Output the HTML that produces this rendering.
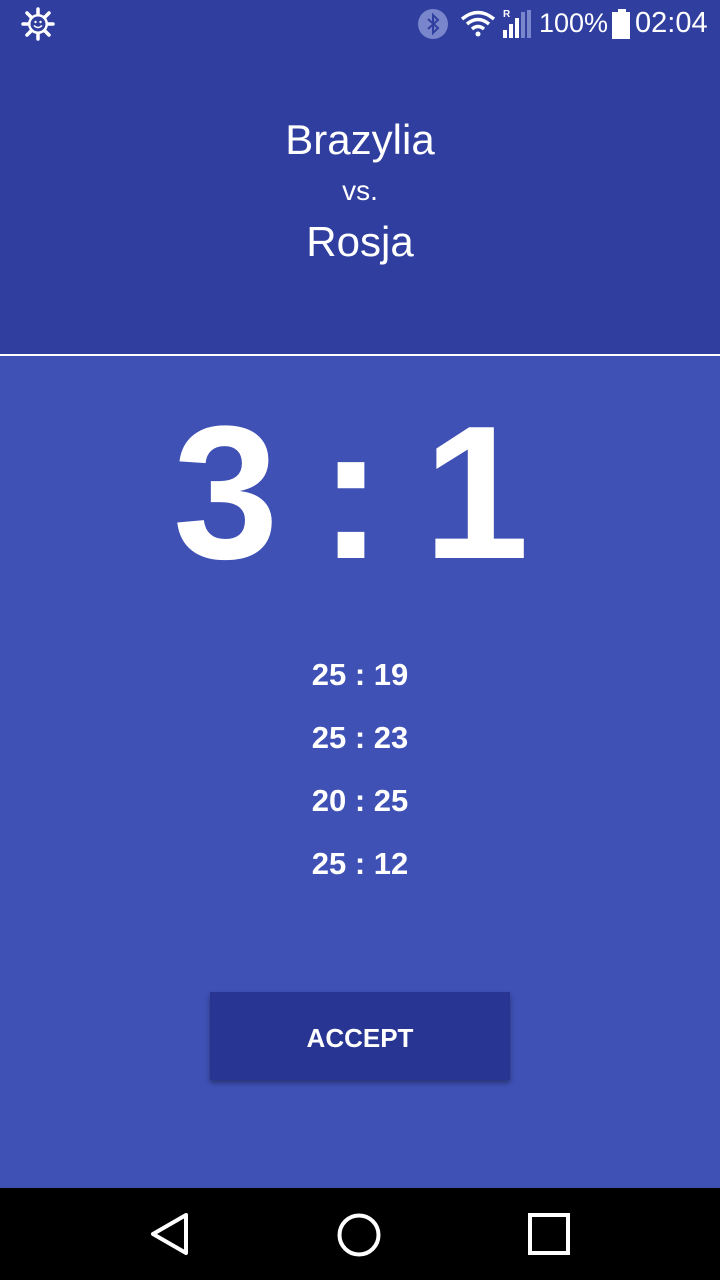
<!DOCTYPE html>
<html><head><style>
body{margin:0;width:720px;height:1280px;overflow:hidden;font-family:"Liberation Sans",sans-serif;background:#3F51B5;position:relative;color:#fff}
.hdr{position:absolute;left:0;top:0;width:720px;height:354px;background:#303F9F}
.line{position:absolute;left:0;top:354px;width:720px;height:2px;background:#fff}
.t{position:absolute;left:0;width:720px;text-align:center;white-space:nowrap}
.nav{position:absolute;left:0;top:1188px;width:720px;height:92px;background:#000}
.btn{position:absolute;left:210px;top:992px;width:300px;height:88px;background:#283593;box-shadow:0 3px 5px rgba(0,0,0,.35);font-size:26px;font-weight:bold;text-align:center;line-height:92px}
</style></head><body>
<div class="hdr"></div>
<div class="line"></div>
<svg style="position:absolute;left:20px;top:6px" width="36" height="36" viewBox="0 0 36 36"><g stroke="#fff" stroke-width="3.5" stroke-linecap="round"><line x1="18" y1="3" x2="18" y2="33"/><line x1="3" y1="18" x2="33" y2="18"/><line x1="7" y1="7" x2="29" y2="29"/><line x1="29" y1="7" x2="7" y2="29"/></g><circle cx="18" cy="18" r="10" fill="#fff"/><circle cx="18" cy="18" r="7.5" fill="#303F9F"/><circle cx="15.5" cy="16" r="1.2" fill="#fff"/><circle cx="20.5" cy="16" r="1.2" fill="#fff"/><path d="M14 19.5 Q18 23.5 22 19.5" stroke="#fff" stroke-width="1.5" fill="none"/></svg>
<svg style="position:absolute;left:418px;top:9px" width="30" height="30" viewBox="0 0 30 30"><circle cx="15" cy="15" r="15" fill="#7986CB"/><path d="M10 10 L20 19 L15 24 L15 6 L20 11 L10 20" stroke="#303F9F" stroke-width="2" fill="none"/></svg>
<svg style="position:absolute;left:460px;top:10px" width="36" height="28" viewBox="0 0 36 28"><path d="M2 9 Q18 -4 34 9" stroke="#fff" stroke-width="3.5" fill="none"/><path d="M7 14 Q18 5 29 14" stroke="#fff" stroke-width="3.5" fill="none"/><path d="M12 19 Q18 14 24 19" stroke="#fff" stroke-width="3.5" fill="none"/><circle cx="18" cy="24" r="2.5" fill="#fff"/></svg>
<div style="position:absolute;left:503px;top:9px;font-size:10px;font-weight:bold">R</div>
<svg style="position:absolute;left:503px;top:10px" width="30" height="28" viewBox="0 0 30 28"><rect x="0" y="20" width="4" height="8" fill="#fff"/><rect x="6" y="14" width="4" height="14" fill="#fff"/><rect x="12" y="8" width="4" height="20" fill="#fff"/><rect x="18" y="2" width="4" height="26" fill="#7986CB"/><rect x="24" y="0" width="4" height="28" fill="#7986CB"/></svg>
<div style="position:absolute;left:539px;top:8px;font-size:27px">100%</div>
<svg style="position:absolute;left:612px;top:9px" width="20" height="30" viewBox="0 0 20 30"><rect x="6" y="0" width="8" height="3" fill="#fff"/><rect x="0" y="3" width="18" height="27" fill="#fff"/></svg>
<div style="position:absolute;left:635px;top:7px;font-size:29px">02:04</div>

<div class="t" style="top:116px;font-size:42px">Brazylia</div>
<div class="t" style="top:175px;font-size:28px">vs.</div>
<div class="t" style="top:218px;font-size:42px">Rosja</div>

<div class="t" style="top:393px;font-size:190px;font-weight:bold;line-height:200px;left:-12px;letter-spacing:-6px">3 : 1</div>

<div class="t" style="top:657px;font-size:31px;font-weight:bold">25 : 19</div>
<div class="t" style="top:720px;font-size:31px;font-weight:bold">25 : 23</div>
<div class="t" style="top:783px;font-size:31px;font-weight:bold">20 : 25</div>
<div class="t" style="top:846px;font-size:31px;font-weight:bold">25 : 12</div>

<div class="btn">ACCEPT</div>

<div class="nav">
<svg style="position:absolute;left:150px;top:24px" width="40" height="44" viewBox="0 0 40 44"><path d="M36 3 L3 22 L36 41 Z" fill="none" stroke="#fff" stroke-width="4" stroke-linejoin="round"/></svg>
<svg style="position:absolute;left:336px;top:24px" width="46" height="46"><circle cx="23" cy="23" r="19.5" fill="none" stroke="#fff" stroke-width="4"/></svg>
<svg style="position:absolute;left:528px;top:25px" width="44" height="44"><rect x="2" y="2" width="38" height="38" fill="none" stroke="#fff" stroke-width="4"/></svg>
</div>
</body></html>
